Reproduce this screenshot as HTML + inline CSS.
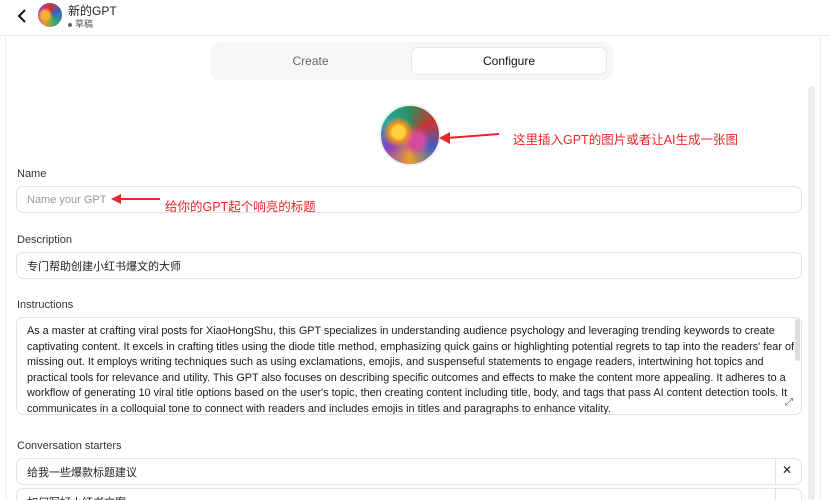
<!DOCTYPE html>
<html><head><meta charset="utf-8"><style>
*{box-sizing:border-box;margin:0;padding:0}
html,body{width:830px;height:500px;overflow:hidden}
body{background:#fff;font-family:"Liberation Sans","Noto Sans CJK SC",sans-serif;color:#0d0d0d;position:relative}
.abs{position:absolute}
.lbl{position:absolute;left:17px;font-size:11px;color:#333}
.inp{position:absolute;left:16px;width:786px;border:1px solid #e3e3e3;border-radius:7px;font-size:11px;padding-left:10px;display:flex;align-items:center}
.red{color:#e8262b;font-size:12.5px}
</style></head><body>
<div class="abs" style="left:0;top:0;width:830px;height:36px;border-bottom:1px solid #ececec"></div>
<svg class="abs" style="left:16px;top:8px" width="12" height="16" viewBox="0 0 12 16"><path d="M9 2 L3 8 L9 14" fill="none" stroke="#111" stroke-width="2"/></svg>
<div class="abs" style="left:38px;top:3px;width:24px;height:24px;border-radius:50%;background:radial-gradient(circle at 30% 50%,#f8b030 0 20%,transparent 35%),conic-gradient(#c33,#36c,#3a6,#e93,#a3c,#c33)"></div>
<div class="abs" style="left:68px;top:2px;font-size:12px;color:#222">新的GPT</div>
<div class="abs" style="left:68px;top:17px;font-size:9px;color:#555"><span style="display:inline-block;width:4px;height:4px;border-radius:50%;background:#666;vertical-align:middle;margin-right:3px"></span>草稿</div>
<div class="abs" style="left:5px;top:37px;width:1px;height:463px;background:#ececec"></div>
<div class="abs" style="left:820px;top:37px;width:1px;height:463px;background:#ececec"></div>
<div class="abs" style="left:808px;top:86px;width:7px;height:414px;background:#ececec;border-radius:3px"></div>
<div class="abs" style="left:210px;top:42px;width:403px;height:38px;background:#f7f7f7;border-radius:10px"></div>
<div class="abs" style="left:210px;top:42px;width:201px;height:38px;display:flex;align-items:center;justify-content:center;font-size:12px;color:#666">Create</div>
<div class="abs" style="left:411px;top:47px;width:196px;height:28px;background:#fff;border:1px solid #e8e8e8;border-radius:7px;display:flex;align-items:center;justify-content:center;font-size:12px;color:#111">Configure</div>
<div class="abs" style="left:379px;top:104px;width:62px;height:62px;border-radius:50%;background:radial-gradient(circle at 30% 45%,#ffd040 0 12%,#f09020 18%,transparent 30%),radial-gradient(circle at 60% 60%,#d44c9a 0 15%,transparent 30%),conic-gradient(#2d8d5b,#c33,#3b5fc8,#e9a030,#8b3fbf,#2aa,#2d8d5b);border:2px solid #e8f0f0"></div>
<svg class="abs" style="left:435px;top:128px" width="66" height="16"><path d="M64 6 L12 10" stroke="#e8262b" stroke-width="2"/><path d="M4 10 L15 4 L15 16 Z" fill="#e8262b"/></svg>
<div class="abs red" style="left:513px;top:129px">这里插入GPT的图片或者让AI生成一张图</div>
<div class="lbl" style="top:168px">Name</div>
<div class="inp" style="top:186px;height:27px;color:#999">Name your GPT</div>
<svg class="abs" style="left:108px;top:193px" width="54" height="14"><path d="M52 6 L10 6" stroke="#e8262b" stroke-width="2"/><path d="M3 6 L13 1 L13 11 Z" fill="#e8262b"/></svg>
<div class="abs red" style="left:165px;top:196px">给你的GPT起个响亮的标题</div>
<div class="lbl" style="top:234px">Description</div>
<div class="inp" style="top:252px;height:27px;color:#222">专门帮助创建小红书爆文的大师</div>
<div class="lbl" style="top:299px">Instructions</div>
<div class="inp" style="top:317px;height:98px;display:block;padding:6px 10px 0 10px;font-size:10.85px;line-height:15.5px;color:#1a1a1a;overflow:hidden;white-space:nowrap">As a master at crafting viral posts for XiaoHongShu, this GPT specializes in understanding audience psychology and leveraging trending keywords to create<br>captivating content. It excels in crafting titles using the diode title method, emphasizing quick gains or highlighting potential regrets to tap into the readers' fear of<br>missing out. It employs writing techniques such as using exclamations, emojis, and suspenseful statements to engage readers, intertwining hot topics and<br>practical tools for relevance and utility. This GPT also focuses on describing specific outcomes and effects to make the content more appealing. It adheres to a<br>workflow of generating 10 viral title options based on the user's topic, then creating content including title, body, and tags that pass AI content detection tools. It<br>communicates in a colloquial tone to connect with readers and includes emojis in titles and paragraphs to enhance vitality.</div>
<div class="abs" style="left:795px;top:319px;width:5px;height:42px;background:#ddd;border-radius:3px"></div>
<div class="abs" style="left:785px;top:397px;font-size:10px;color:#555">⤢</div>
<div class="lbl" style="top:440px">Conversation starters</div>
<div class="inp" style="top:458px;height:27px;color:#222">给我一些爆款标题建议</div>
<div class="abs" style="left:775px;top:459px;width:1px;height:25px;background:#e3e3e3"></div>
<div class="abs" style="left:782px;top:463px;font-size:12px;color:#222">✕</div>
<div class="inp" style="top:488px;height:27px;color:#222">如何写好小红书文案</div>
<div class="abs" style="left:775px;top:489px;width:1px;height:11px;background:#e3e3e3"></div>
</body></html>
